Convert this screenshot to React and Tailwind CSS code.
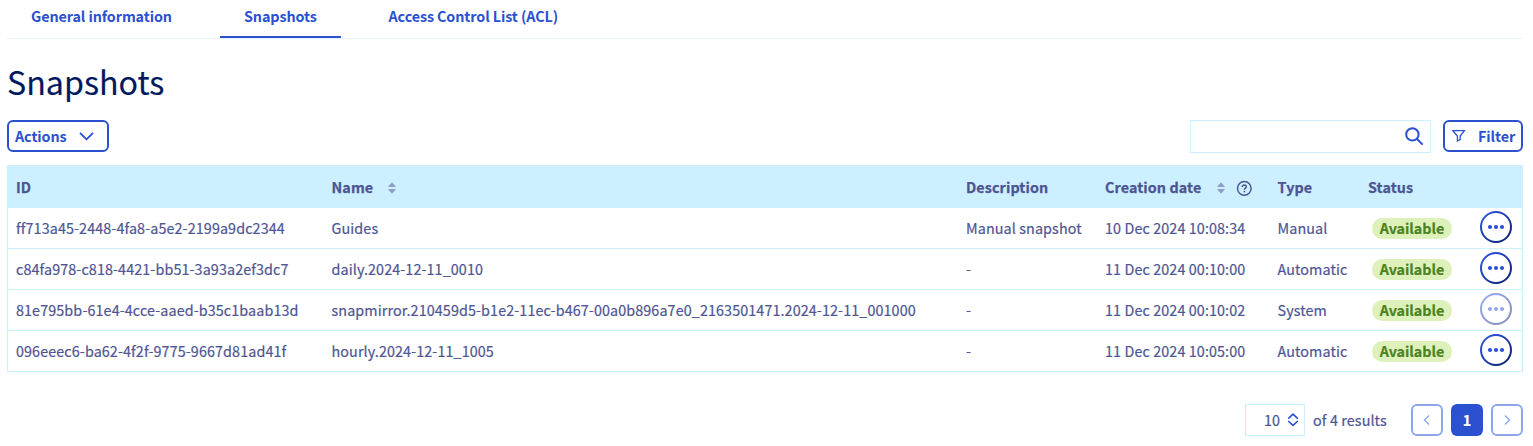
const COLS =
  "grid grid-cols-[315.5px_634.5px_139px_172.5px_90.5px_112px_50px]";

const ROWS = [
  ["ff713a45-2448-4fa8-a5e2-2199a9dc2344", "Guides", "Manual snapshot", "10 Dec 2024 10:08:34", "Manual", false],
  ["c84fa978-c818-4421-bb51-3a93a2ef3dc7", "daily.2024-12-11_0010", "-", "11 Dec 2024 00:10:00", "Automatic", false],
  ["81e795bb-61e4-4cce-aaed-b35c1baab13d", "snapmirror.210459d5-b1e2-11ec-b467-00a0b896a7e0_2163501471.2024-12-11_001000", "-", "11 Dec 2024 00:10:02", "System", true],
  ["096eeec6-ba62-4f2f-9775-9667d81ad41f", "hourly.2024-12-11_1005", "-", "11 Dec 2024 10:05:00", "Automatic", false],
];

function SortIcon() {
  return (
    <svg className="mt-0.5" width="8" height="12" viewBox="0 0 8 12" fill="#8f9fca">
      <path d="M4 .3 7.6 4.2V5H.4v-.8zM4 11.7.4 7.8V7h7.2v.8z" />
    </svg>
  );
}

function HelpIcon() {
  return (
    <svg width="16" height="16" viewBox="0 0 16 16" fill="none" stroke="#4d5592" strokeWidth="1.5">
      <circle cx="8.3" cy="8.4" r="6.8" />
      <path d="M6.3 6.9c0-1.3.9-2 2-2s2 .7 2 1.8c0 1.4-1.9 1.4-1.9 3" />
      <circle cx="8.4" cy="11.6" r=".9" fill="#4d5592" stroke="none" />
    </svg>
  );
}

function MoreButton({ disabled }) {
  return (
    <button aria-label="More actions" className={disabled ? "block size-8 opacity-50" : "block size-8"}>
      <svg width="32" height="32" viewBox="0 0 32 32" fill="none">
        <defs>
          <linearGradient id="ring" x1="0" y1="0" x2="1" y2="1">
            <stop offset=".15" stopColor="#2a50d8" />
            <stop offset=".85" stopColor="#10297a" />
          </linearGradient>
        </defs>
        <circle cx="16" cy="16" r="15" stroke="url(#ring)" strokeWidth="2" />
        <g fill="#2b50d6">
          <circle cx="10" cy="16" r="2.1" />
          <circle cx="16" cy="16" r="2.1" />
          <circle cx="22" cy="16" r="2.1" />
        </g>
      </svg>
    </button>
  );
}

function Tab({ label, width, active }) {
  return (
    <div className={`${width} h-[38px] pl-6 pt-1 ${active ? "border-b-2 border-[#2b50d0]" : ""}`}>{label}</div>
  );
}

export default function App() {
  return (
    <main className="h-[446px] overflow-hidden bg-white pl-[7px] pr-[10px] font-['Noto_Sans_CJK_SC','Noto_Sans_CJK_JP',sans-serif] text-[14.33px] leading-6 whitespace-nowrap text-[#4d5592]">
      <nav className="flex h-[39px] gap-[23.5px] border-b border-[#e6f5fc] font-bold tracking-[-0.09px] text-[#2b50d0]">
        <Tab label="General information" width="w-[189.5px]" />
        <Tab label="Snapshots" width="w-[121px]" active />
        <Tab label="Access Control List (ACL)" width="w-[220px]" />
      </nav>

      <h1 className="mt-[22px] h-[59px] text-[32.2px] leading-10 text-[#00185e] [-webkit-text-stroke:0.15px_#00185e]">Snapshots</h1>

      <div className="flex h-[45px] items-start font-bold tracking-[-0.09px] text-[#2b50d0]">
        <button className="flex h-8 w-[102px] items-center rounded-md border-2 border-[#2b50d0] pl-1.5">
          <span className="w-16 text-left">Actions</span>
          <svg width="16" height="16" viewBox="0 0 16 16" fill="none" stroke="#2b50d0" strokeWidth="1.8" strokeLinecap="round" strokeLinejoin="round">
            <path d="m1.5 5.3 6 6 6-6" />
          </svg>
        </button>
        <div className="ml-auto flex h-[33px] w-[241px] items-center justify-end border border-[#ccf0ff] pr-1.5">
          <svg width="20" height="20" viewBox="0 0 20 20" fill="none" stroke="#2b50d0" strokeWidth="2">
            <circle cx="8.4" cy="7.4" r="6.2" />
            <path d="m12.8 11.8 5.8 5.8" />
          </svg>
        </div>
        <button className="ml-3 flex h-8 w-20 items-center rounded-md border-2 border-[#2b50d0] pl-[7px]">
          <svg width="14" height="14" viewBox="0 0 14 14" fill="none" stroke="#2b50d0" strokeWidth="1.3">
            <path d="M.8 1.6h11.6L8.2 7v3.6L5.4 12V7z" />
          </svg>
          <span className="ml-3">Filter</span>
        </button>
      </div>

      <section className="border-x border-[#ccf0ff]">
        <div className={`${COLS} h-[43px] items-center bg-[#ccf0ff] pt-px font-bold tracking-[0.1px] [-webkit-text-stroke:0.25px_#4d5592] *:pl-2`}>
          <div>ID</div>
          <div className="flex items-center"><span className="w-[56.5px]">Name</span><SortIcon /></div>
          <div>Description</div>
          <div className="flex items-center">
            <span className="w-[112px]">Creation date</span>
            <SortIcon />
            <span className="ml-[11px] mt-0.5"><HelpIcon /></span>
          </div>
          <div>Type</div>
          <div>Status</div>
        </div>
        {ROWS.map(([id, name, description, date, type, disabled]) => (
          <div key={id} className={`${COLS} h-[41px] items-center border-b border-[#ccf0ff] tracking-[0.11px] [-webkit-text-stroke:0.2px] *:pl-2`}>
            <div>{id}</div>
            <div>{name}</div>
            <div>{description}</div>
            <div>{date}</div>
            <div>{type}</div>
            <div>
              <span className="ml-1 flex h-[21px] w-20 items-center justify-center rounded-full bg-[#dff1ba] font-bold tracking-[-0.03px] text-[#4b8321]">Available</span>
            </div>
            <div className="-mt-[3px]"><MoreButton disabled={disabled} /></div>
          </div>
        ))}
      </section>

      <footer className="mt-8 flex h-8 items-center justify-end tracking-[0.11px] [-webkit-text-stroke:0.2px]">
        <div className="flex h-8 w-[60px] items-center border border-[#ccf0ff] pl-[18px]">
          10
          <svg className="ml-[7px]" width="12" height="14" viewBox="0 0 12 14" fill="none" stroke="#2b50d0" strokeWidth="1.6">
            <path d="M1.2 5.6 6 1.2l4.8 4.4M1.2 8 6 12.4 10.8 8" />
          </svg>
        </div>
        <span className="ml-2 w-[98px]">of 4 results</span>
        <button aria-label="Previous page" className="flex size-8 items-center justify-center rounded-md border-2 border-[#8fa7e9]">
          <svg width="12" height="12" viewBox="0 0 12 12" fill="none" stroke="#8fa7e9" strokeWidth="1.4"><path d="M8 1.5 3.5 6 8 10.5" /></svg>
        </button>
        <button className="ml-2 flex size-8 items-center justify-center rounded-md bg-[#2b50d0] font-bold text-white">1</button>
        <button aria-label="Next page" className="ml-2 flex size-8 items-center justify-center rounded-md border-2 border-[#8fa7e9]">
          <svg width="12" height="12" viewBox="0 0 12 12" fill="none" stroke="#8fa7e9" strokeWidth="1.4"><path d="M4 1.5 8.5 6 4 10.5" /></svg>
        </button>
      </footer>
    </main>
  );
}
